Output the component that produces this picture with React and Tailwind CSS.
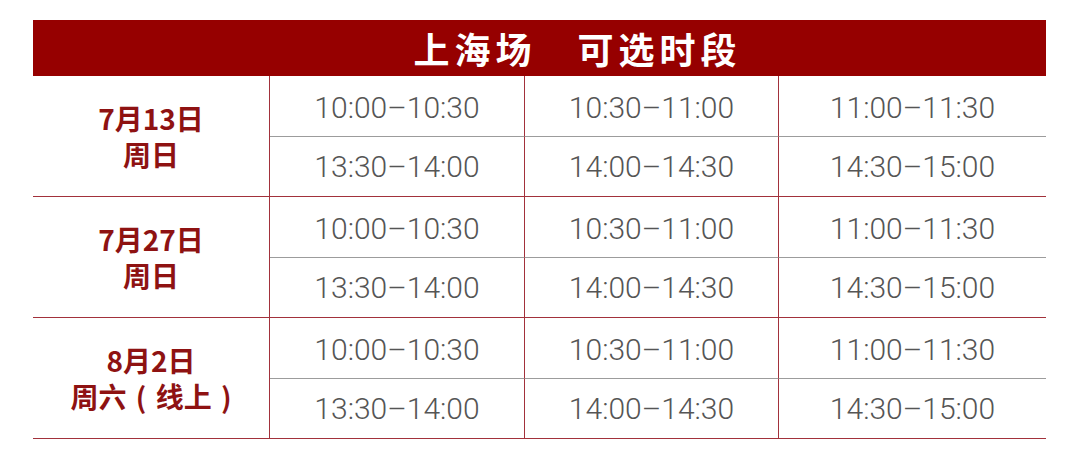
import React from "react";

const sections = [
  { date: "7月13日", day: "周日" },
  { date: "7月27日", day: "周日" },
  { date: "8月2日", day: "周六 ( 线上 )" },
];

const slots = [
  ["10:00–10:30", "10:30–11:00", "11:00–11:30"],
  ["13:30–14:00", "14:00–14:30", "14:30–15:00"],
];

const cjk = { fontFamily: '"Noto Sans CJK SC", "Noto Sans", sans-serif' };
const num = { fontFamily: 'Roboto, "Liberation Sans", sans-serif' };

const App = () => {
  return (
    <div className="w-[1080px] h-[470px] bg-white pt-[20px] pl-[33px]">
      <div className="w-[1013px]">
        <div
          className="h-[56px] bg-[#960000] flex items-center justify-center pl-[76px] text-white text-[36px] font-bold tracking-[5px]"
          style={cjk}
        >
          上海场　可选时段
        </div>
        {sections.map((s) => (
          <div
            key={s.date}
            className="grid grid-cols-[237px_255px_254px_267px] border-b border-[#a2313b]"
          >
            <div
              className="row-span-2 border-r border-[#a2313b] flex flex-col items-center justify-center text-[#8e1212] font-bold text-[28px] leading-[36px] whitespace-pre [word-spacing:3px]"
              style={cjk}
            >
              <div>{s.date}</div>
              <div>{s.day}</div>
            </div>
            {slots.map((row, ri) =>
              row.map((t, ci) => (
                <div
                  key={t}
                  className={
                    "flex items-center justify-center text-[30px] font-light text-[#555555] " +
                    (ri === 0 ? "h-[61px] pt-[3px] border-b border-[#9c9c9c] " : "h-[59px] ") +
                    (ci < 2 ? "border-r border-r-[#a2313b]" : "")
                  }
                  style={num}
                >
                  {t}
                </div>
              ))
            )}
          </div>
        ))}
      </div>
    </div>
  );
};

export default App;
